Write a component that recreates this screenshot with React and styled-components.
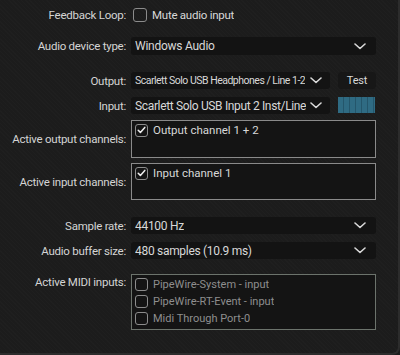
import React from "react";
import styled, { createGlobalStyle } from "styled-components";

const Global = createGlobalStyle`
  html, body { margin: 0; padding: 0; background: #1c1c1c; }
  body { font-family: Roboto, "Liberation Sans", sans-serif; }
`;

const Panel = styled.div`
  width: 400px;
  height: 355px;
  box-sizing: border-box;
  background-color: #1c1c1c;
  background-image: repeating-linear-gradient(45deg, rgba(255,255,255,0.012) 0 1px, transparent 1px 3px);
  border-right: 2px solid #2c2c2c;
  border-bottom: 2px solid #2c2c2c;
  border-bottom-right-radius: 8px;
  padding-top: 5px;
  display: flex;
  flex-direction: column;
`;

const Row = styled.div`
  display: grid;
  grid-template-columns: 126px 245px;
  column-gap: 5px;
  height: ${(p) => p.$h}px;
  margin-top: ${(p) => p.$mt || 0}px;
  align-items: ${(p) => (p.$top ? "start" : "center")};
`;

const Label = styled.div`
  text-align: right;
  color: #d4d4d4;
  font-size: 11.5px;
  letter-spacing: -0.25px;
  white-space: nowrap;
  align-self: ${(p) => (p.$top ? "start" : "center")};
  padding-top: ${(p) => (p.$top ? 1 : 0)}px;
`;

const Inline = styled.div`
  display: flex;
  align-items: center;
  gap: 5px;
  height: 100%;
`;

const Box = styled.span`
  width: ${(p) => p.$s}px;
  height: ${(p) => p.$s}px;
  box-sizing: border-box;
  border: 1px solid #8c8c8c;
  border-radius: 3px;
  flex: none;
  display: flex;
  align-items: center;
  justify-content: center;
  margin-left: ${(p) => p.$ml || 0}px;
`;

const Text = styled.span`
  color: ${(p) => p.$c || "#d8d8d8"};
  font-size: ${(p) => p.$fs || 11.5}px;
  letter-spacing: ${(p) => p.$ls ?? -0.25}px;
  white-space: nowrap;
  overflow: hidden;
  min-width: 0;
`;

const Combo = styled.div`
  display: flex;
  align-items: center;
  justify-content: space-between;
  gap: 4px;
  height: 100%;
  box-sizing: border-box;
  background: #131313;
  border-radius: 3px;
  padding: 0 ${(p) => (p.$w ? 8 : 10)}px 0 4px;
  overflow: hidden;
  width: ${(p) => (p.$w ? p.$w + "px" : "auto")};
`;

const Split = styled.div`
  display: flex;
  gap: 8px;
  height: 100%;
`;

const Button = styled.div`
  flex: 1;
  display: flex;
  align-items: center;
  justify-content: center;
  background: #171717;
  border-radius: 4px;
  color: #d8d8d8;
  font-size: 11px;
  letter-spacing: -0.2px;
`;

const Meter = styled.div`
  flex: 1;
  margin: 0 1px 1px 0;
  background: repeating-linear-gradient(90deg, #2f6b83 0 5px, #24566b 5px 6px);
`;

const ListBox = styled.div`
  height: 100%;
  box-sizing: border-box;
  border: 1px solid ${(p) => p.$bc || "#8a8a8a"};
  background: #141414;
  padding: ${(p) => p.$pt || 2}px 0 0 3px;
  display: flex;
  flex-direction: column;
  gap: ${(p) => p.$gap || 0}px;
`;

const Item = styled.div`
  display: flex;
  align-items: center;
  gap: 5px;
  height: ${(p) => p.$h || 14}px;
`;

const Chevron = () => (
  <svg width="12" height="7" viewBox="0 0 12 7" style={{ flex: "none" }}>
    <path d="M1 1 L6 5.5 L11 1" fill="none" stroke="#d8d8d8" strokeWidth="1.6" strokeLinecap="round" strokeLinejoin="round" />
  </svg>
);

const Check = () => (
  <svg width="9" height="8" viewBox="0 0 9 8">
    <path d="M1.2 4.2 L3.4 6.4 L7.8 1.4" fill="none" stroke="#f0f0f0" strokeWidth="1.5" strokeLinecap="round" strokeLinejoin="round" />
  </svg>
);

export default function App() {
  return (
    <>
      <Global />
      <Panel>
        <Row $h={19}>
          <Label>Feedback Loop:</Label>
          <Inline>
            <Box $s={14} $ml={2} />
            <Text>Mute audio input</Text>
          </Inline>
        </Row>
        <Row $h={18} $mt={13}>
          <Label>Audio device type:</Label>
          <Combo>
            <Text $fs={12}>Windows Audio</Text>
            <Chevron />
          </Combo>
        </Row>
        <Row $h={17} $mt={17}>
          <Label>Output:</Label>
          <Split>
            <Combo $w={199}>
              <Text $fs={10.5} $ls={-0.5}>Scarlett Solo USB Headphones / Line 1-2</Text>
              <Chevron />
            </Combo>
            <Button>Test</Button>
          </Split>
        </Row>
        <Row $h={17} $mt={8}>
          <Label>Input:</Label>
          <Split>
            <Combo $w={199}>
              <Text $fs={12} $ls={-0.35}>Scarlett Solo USB Input 2 Inst/Line</Text>
              <Chevron />
            </Combo>
            <Meter />
          </Split>
        </Row>
        <Row $h={38} $mt={6}>
          <Label>Active output channels:</Label>
          <ListBox>
            <Item>
              <Box $s={13}><Check /></Box>
              <Text $fs={11.5} $ls={0}>Output channel 1 + 2</Text>
            </Item>
          </ListBox>
        </Row>
        <Row $h={37} $mt={5}>
          <Label>Active input channels:</Label>
          <ListBox>
            <Item>
              <Box $s={13}><Check /></Box>
              <Text $fs={11.5} $ls={0}>Input channel 1</Text>
            </Item>
          </ListBox>
        </Row>
        <Row $h={17} $mt={17}>
          <Label>Sample rate:</Label>
          <Combo>
            <Text $fs={12} $ls={-0.3}>44100 Hz</Text>
            <Chevron />
          </Combo>
        </Row>
        <Row $h={17} $mt={8}>
          <Label>Audio buffer size:</Label>
          <Combo>
            <Text $fs={12} $ls={-0.3}>480 samples (10.9 ms)</Text>
            <Chevron />
          </Combo>
        </Row>
        <Row $h={56} $mt={15} $top>
          <Label $top>Active MIDI inputs:</Label>
          <ListBox $bc="#6c736c" $pt={3} $gap={4}>
            <Item $h={13}>
              <Box $s={13} />
              <Text $fs={11} $ls={0} $c="#8e8e8e">PipeWire-System - input</Text>
            </Item>
            <Item $h={13}>
              <Box $s={13} />
              <Text $fs={11} $ls={0} $c="#8e8e8e">PipeWire-RT-Event - input</Text>
            </Item>
            <Item $h={13}>
              <Box $s={13} />
              <Text $fs={11} $ls={0} $c="#8e8e8e">Midi Through Port-0</Text>
            </Item>
          </ListBox>
        </Row>
      </Panel>
    </>
  );
}
